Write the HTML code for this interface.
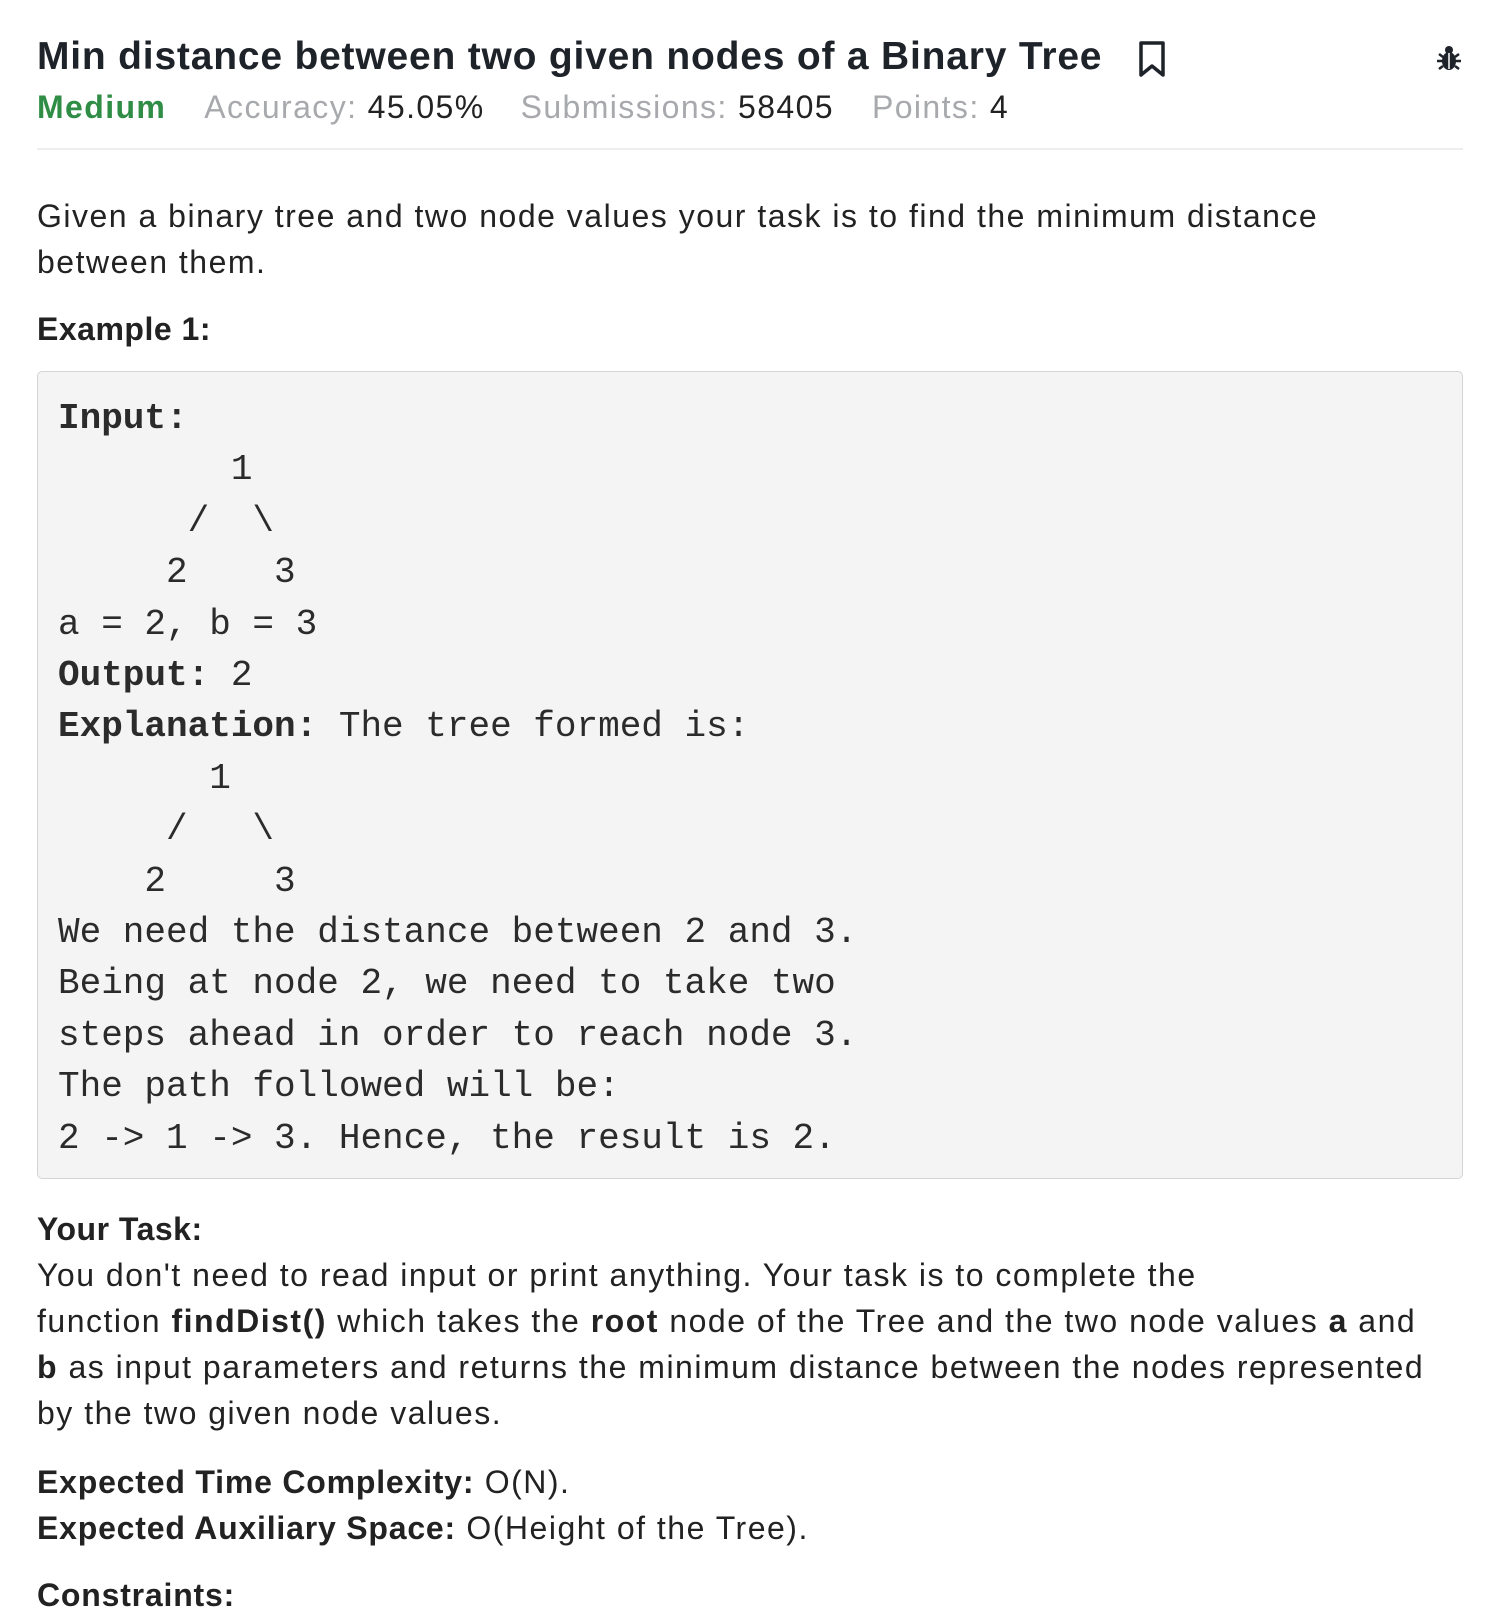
<!DOCTYPE html>
<html><head><meta charset="utf-8"><style>
body{margin:0;width:1502px;height:1616px;background:#fff;position:relative;overflow:hidden;font-family:"Liberation Sans",sans-serif;color:#222;}
.a{position:absolute;white-space:nowrap;}
h1{position:absolute;left:37px;top:35px;margin:0;font-size:39px;font-weight:bold;color:#1e2229;letter-spacing:0.8px;}
.meta{left:37px;top:89px;font-size:32px;color:#a7a9ad;letter-spacing:1.4px;}
.meta b{font-weight:normal;color:#222;}
.rule{position:absolute;left:37px;top:148px;width:1426px;height:2px;background:#eee;}
.p{position:absolute;left:37px;font-size:32px;line-height:46px;color:#222;letter-spacing:1.5px;white-space:nowrap;}
.box{position:absolute;left:37px;top:371px;width:1426px;height:808px;background:#f4f4f4;border:1.5px solid #d4d4d4;border-radius:5px;box-sizing:border-box;}
pre{position:absolute;left:20px;top:21px;margin:0;font-family:"Liberation Mono","DejaVu Sans Mono",monospace;font-size:36px;line-height:51.4px;color:#2b2b2b;}
</style></head><body>
<h1>Min distance between two given nodes of a Binary Tree</h1>
<svg class="a" style="left:1137px;top:40px" width="30" height="38" viewBox="0 0 30 38"><path d="M4 3h22v32l-11-9-11 9z" fill="none" stroke="#1e2229" stroke-width="3.5" stroke-linejoin="round"/></svg>
<svg class="a" style="left:1433px;top:42px" width="32" height="32" viewBox="0 0 32 32" fill="#1e2229"><ellipse cx="16" cy="19" rx="7" ry="9"/><circle cx="16" cy="8" r="4"/><path d="M6 12l4 3M26 12l-4 3M4 19h6M28 19h-6M6 27l4-3M26 27l-4-3" stroke="#1e2229" stroke-width="2.5"/><path d="M16 11v16" stroke="#fff" stroke-width="1.5"/></svg>
<div class="a meta"><span style="color:#2f8d46;font-weight:bold">Medium</span><span style="margin-left:38px">Accuracy: <b>45.05%</b></span><span style="margin-left:36px">Submissions: <b>58405</b></span><span style="margin-left:38px">Points: <b>4</b></span></div>
<div class="rule"></div>
<div class="p" style="top:193px">Given a binary tree and two node values your task is to find the minimum distance<br>between them.</div>
<div class="p" style="top:306px;font-weight:bold;letter-spacing:0.5px">Example 1:</div>
<div class="box"><pre><b>Input:</b>
        1
      /  \
     2    3
a = 2, b = 3
<b>Output:</b> 2
<b>Explanation:</b> The tree formed is:
       1
     /   \
    2     3
We need the distance between 2 and 3.
Being at node 2, we need to take two
steps ahead in order to reach node 3.
The path followed will be:
2 -&gt; 1 -&gt; 3. Hence, the result is 2.</pre></div>
<div class="p" style="top:1206px"><b style="letter-spacing:0.5px">Your Task:</b><br>You don't need to read input or print anything. Your task is to complete the<br>function <b>findDist()</b> which takes the <b>root</b> node of the Tree and the two node values <b>a</b> and<br><b>b</b> as input parameters and returns the minimum distance between the nodes represented<br>by the two given node values.</div>
<div class="p" style="top:1459px"><b style="letter-spacing:0.8px">Expected Time Complexity:</b> O(N).<br><b style="letter-spacing:0.8px">Expected Auxiliary Space:</b> O(Height of the Tree).</div>
<div class="p" style="top:1572px"><b style="letter-spacing:0.8px">Constraints:</b></div>
</body></html>
